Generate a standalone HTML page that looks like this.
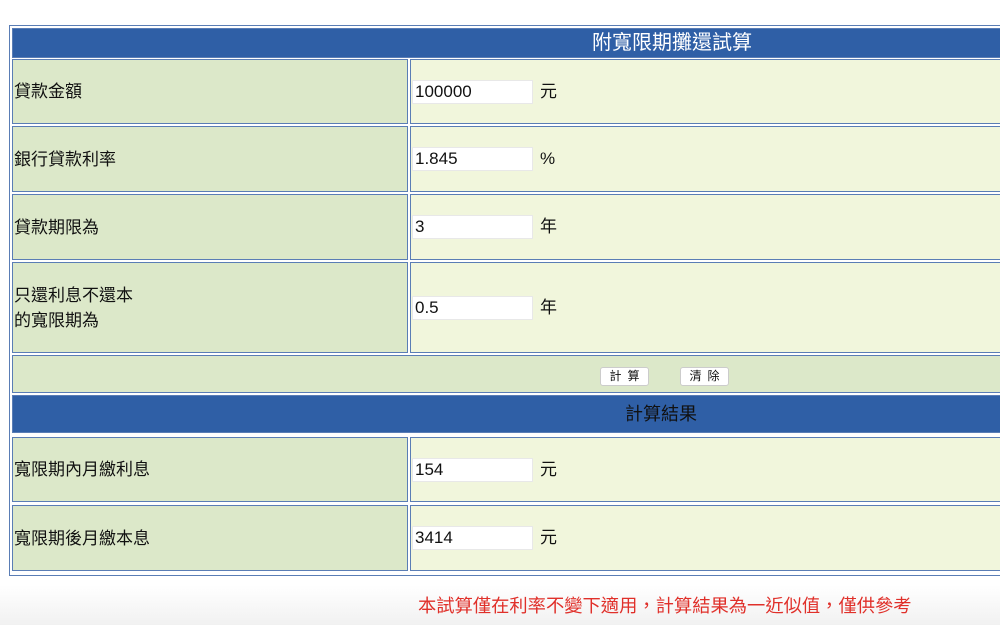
<!DOCTYPE html>
<html><head><meta charset="utf-8"><style>
*{margin:0;padding:0;box-sizing:border-box}
body{width:1000px;height:625px;background:#fff;position:relative;overflow:hidden;font-family:"Liberation Sans","Noto Sans CJK TC",sans-serif;font-size:17px;color:#111}
.b{position:absolute;border:1px solid #5a7db5}
.outer{position:absolute;left:9px;top:25px;width:1000px;height:551px;border:1px solid #5a7db5;border-right:none}
.hd{background:#2f5fa6;text-align:center;font-size:17px;line-height:28px}
.l{background:#dce8c9;padding-left:1px;display:flex;align-items:center;line-height:25px}
.v{background:#f1f6dc;display:flex;align-items:center;padding-left:1px;line-height:24px}
.in{width:121px;height:24px;background:#fff;border:1px solid #e8e8e8;padding-left:2px;line-height:22px;font-size:17px;margin-right:7px}
.btn{position:absolute;top:367px;height:19px;background:#fff;border:1px solid #ccc;border-radius:3px;font-size:12px;line-height:17px;text-align:center;letter-spacing:6px;padding-left:6px}
.foot{position:absolute;left:0;top:585px;width:1000px;height:40px;background:linear-gradient(#fff,#f1f1f1)}
</style></head><body>
<div class="outer"></div>
<div class="b hd" style="left:12px;top:28px;width:990px;height:30px;color:#fff;padding-left:330px;font-size:20px">附寬限期攤還試算</div>

<div class="b l" style="left:12px;top:59px;width:396px;height:65px">貸款金額</div>
<div class="b v" style="left:410px;top:59px;width:592px;height:65px"><div class="in">100000</div>元</div>

<div class="b l" style="left:12px;top:126px;width:396px;height:66px">銀行貸款利率</div>
<div class="b v" style="left:410px;top:126px;width:592px;height:66px"><div class="in">1.845</div>%</div>

<div class="b l" style="left:12px;top:194px;width:396px;height:66px">貸款期限為</div>
<div class="b v" style="left:410px;top:194px;width:592px;height:66px"><div class="in">3</div>年</div>

<div class="b l" style="left:12px;top:262px;width:396px;height:91px">只還利息不還本<br>的寬限期為</div>
<div class="b v" style="left:410px;top:262px;width:592px;height:91px"><div class="in">0.5</div>年</div>

<div class="b" style="left:12px;top:355px;width:990px;height:38px;background:#dce8c9"></div>
<div class="btn" style="left:600px;width:49px">計算</div>
<div class="btn" style="left:680px;width:49px">清除</div>

<div class="b hd" style="left:12px;top:395px;width:990px;height:38px;line-height:36px;color:#111;padding-left:308px;font-size:18px">計算結果</div>

<div class="b l" style="left:12px;top:437px;width:396px;height:65px">寬限期內月繳利息</div>
<div class="b v" style="left:410px;top:437px;width:592px;height:65px"><div class="in">154</div>元</div>

<div class="b l" style="left:12px;top:505px;width:396px;height:66px">寬限期後月繳本息</div>
<div class="b v" style="left:410px;top:505px;width:592px;height:66px"><div class="in">3414</div>元</div>

<div class="foot"></div>
<div style="position:absolute;left:418px;top:594px;color:#e0302a;font-size:18.3px;line-height:24px;white-space:nowrap">本試算僅在利率不變下適用，計算結果為一近似值，僅供參考</div>
</body></html>
